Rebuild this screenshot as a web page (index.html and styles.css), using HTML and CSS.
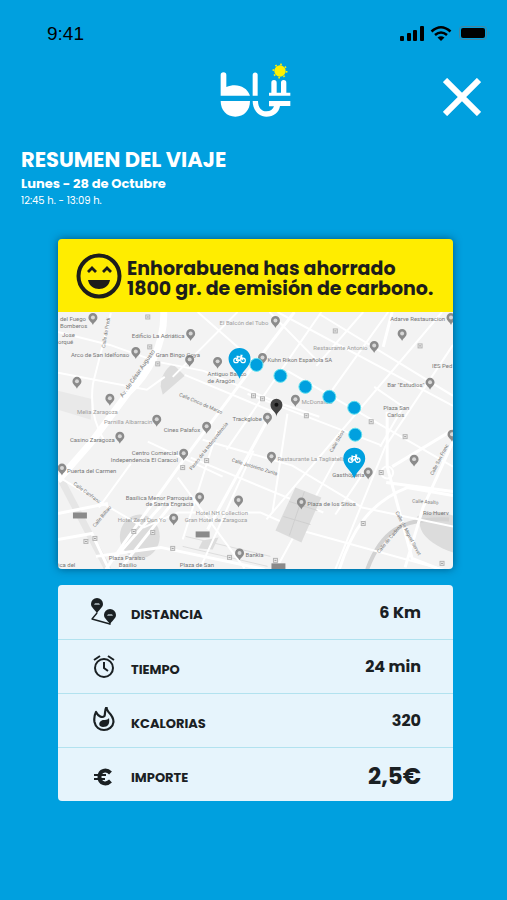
FILE: index.html
```html
<!DOCTYPE html>
<html lang="es">
<head>
    <meta charset="UTF-8">
    <meta name="viewport" content="width=device-width, initial-scale=1">
    <title>Resumen del viaje</title>
    <link rel="stylesheet" href="styles.css">
</head>
<body>
    <div class="status">
        <span class="clock">9:41</span>
        <svg class="status-icons" viewBox="0 0 92 18" aria-hidden="true">
            <rect x="0" y="11" width="4" height="5" rx="1"/>
            <rect x="7" y="8" width="4" height="8" rx="1"/>
            <rect x="13" y="5" width="4" height="11" rx="1"/>
            <rect x="20" y="1" width="4" height="15" rx="1"/>
            <g fill="none" stroke="#000" stroke-width="2.6">
                <path d="M31.5 6.5Q41-2 50.500 6.500"/>
                <path d="M35 10Q41 5 47 10"/>
            </g>
            <path d="M37.500 12.500Q41 10 44.500 12.500L41 16Z"/>
            <rect x="59.500" y="1.500" width="27" height="13" rx="3" fill="none" stroke="#47849d"/>
            <rect x="61" y="3" width="24" height="10" rx="2"/>
            <path d="M88.500 6v4q2-2 0-4" fill="#47849d"/>
        </svg>
    </div>

    <header class="top">
        <svg class="logo" viewBox="60 35 216 165" role="img" aria-label="blü">
            <g fill="#fff">
                <path d="M62 74a8 8 0 0 1 17 0v36c30-12 61-2 71 26H62Z"/>
                <path d="M62 152h88c0 28-18 47-44 47s-44-19-44-47Z"/>
                <path d="M158 74a7 7 0 0 1 15 0v62h-15Z"/>
                <path d="M158 152h16c0 20 11 31 25 31 12 0 20-6 23-15h-15v-16h64v15h-31c-3 20-19 32-41 32-24 0-41-20-41-47Z"/>
                <path d="M207 127h7V97a8 8 0 0 1 16 0v30h13V97a8 8 0 0 1 16 0v30h12v9h-64Z"/>
            </g>
            <circle cx="240" cy="62" r="17" fill="#fff200"/>
            <circle cx="240" cy="62" r="20" fill="none" stroke="#fff200" stroke-width="5" stroke-dasharray="5 10.700"/>
        </svg>
        <button class="close" type="button" aria-label="Cerrar">
            <svg viewBox="0 0 38 38"><path d="M2 2L36 36M36 2L2 36"/></svg>
        </button>
    </header>

    <main>
        <section class="heading">
            <h1>RESUMEN DEL VIAJE</h1>
            <p class="date">Lunes - 28 de Octubre</p>
            <p class="hours">12:45 h. - 13:09 h.</p>
        </section>

        <section class="trip">
            <div class="banner">
                <svg class="smile" viewBox="0 0 46 46" aria-hidden="true">
                    <circle cx="23" cy="23" r="20.500" fill="none" stroke="#1d1d1b" stroke-width="4"/>
                    <path d="M12 19l4-4 4 4M27 19l4-4 4 4" fill="none" stroke="#1d1d1b" stroke-width="2.800"/>
                    <path d="M12 27h22c-1 6-6 9-11 9s-10-3-11-9Z" fill="#1d1d1b"/>
                </svg>
                <p>Enhorabuena has ahorrado<br>1800 gr. de emisión de carbono.</p>
            </div>
            <svg class="map" viewBox="0 0 396 258" preserveAspectRatio="xMidYMid slice" role="img" aria-label="Mapa del recorrido">
                <defs>
                    <g id="pin">
                        <path d="M0 6C-1 3-4.500 2-4.500-1.500a4.500 4.500 0 0 1 9 0C4.500 2 1 3 0 6Z" fill="#8b8b8b"/>
                        <circle cy="-1.500" r="2" fill="#d8d8d8"/>
                    </g>
                    <g id="stop">
                        <rect x="-2" y="-2" width="4" height="4" fill="#eee" stroke="#b4b4b4"/>
                        <path d="M-1 0h2" stroke="#999"/>
                    </g>
                    <g id="bike">
                        <path d="M0 20C-2 12-11 8-11 0a11 11 0 0 1 22 0C11 8 2 12 0 20Z" fill="#00a0df"/>
                        <g fill="none" stroke="#fff" stroke-width="1.200">
                            <circle cx="-3.500" cy="1.500" r="2.300"/>
                            <circle cx="3.500" cy="1.500" r="2.300"/>
                            <path d="M-3.500 1.500L-1.500-2H2L0 1.500h-3.500M3.500 1.500L1.500-3.500H3M-3-2.500h2"/>
                        </g>
                    </g>
                </defs>
                <rect width="396" height="258" fill="#f3f3f3"/>

                <!-- parks and squares -->
                <g fill="#dcdcdc">
                    <path d="M0 79l33 8v21L0 98Z" fill="#e9e9e9"/>
                    <path d="M115 52l12 12-22 19-2-8c0-10 5-18 12-23Z"/>
                    <path d="M360 205c15-8 26-3 36-1v37c-15-5-28-13-32-23Z"/>
                    <ellipse cx="82" cy="225" rx="20" ry="22"/>
                    <path d="M145 229l16-3-6 12-14-1Z"/>
                </g>
                <g fill="none" stroke="#e6e6e6">
                    <path d="M4 170L50 258" stroke-width="7"/>
                    <path d="M310 258c14-38 34-52 82-50" stroke="#d2d2d2" stroke-width="4"/>
                    <path d="M128 225l85 20M125 235l85 20" stroke="#ddd"/>
                </g>

                <!-- streets -->
                <g fill="none" stroke="#fff" stroke-width="2">
                    <path d="M106 0c1 34-17 64-35 80L34 130 0 169" stroke-width="7"/>
                    <path d="M237 0L211 34 134 137 66 232 48 258M150 218L220 90" stroke-width="3"/>
                    <path d="M0 165l45 27 41 24 34-15 83 0 41 18 152 42" stroke-width="2"/>
                    <path d="M53 1L35 72c-3 23 2 42 12 58M0 20l52 13 48 17 46 9 72 31 44 15M0 61l89 17 18-13M127 63l91 38"/>
                    <path d="M140 0l57 50M180 0l-65 65M212 0l50 51M264 0L169 138M306 0l-47 54M331 0l-56 78M385 0L209 208M396 33l-68 102-50 123M220 0l176 94M262 2l134 82M230 59l166 96M190 82l135 52M317 75l29 20-23 40"/>
                    <path d="M145 128l90 26 70 42 91 19M133 146l133 55M120 166l67 91M90 130l75 35M73 152l-32 44M160 118l-35 110M196 139l-54 119M280 145l-61 112M230 102l-15 99M309 157l-31 46"/>
                    <path d="M282 258c12-38 30-67 68-82l46 8M330 100v55l25 92 28 11M335 0l-9 35M335 155l61-37M329 171l67 9M348 256l18-60 30-66" stroke-width="3"/>
                    <path d="M0 202l50-10M0 228l34-6 17 36M38 245l65-9 104 22M55 249L107 190M62 258l53-67" stroke-width="3"/>
                    <circle cx="330" cy="161" r="6"/>
                </g>
                <path d="M238 176l26 10-20 45-26-12Z" fill="#dcdcdc"/>
                <path d="M232 190l28 9M226 205l27 8M247 180l-15 44" fill="none" stroke="#cfcfcf"/>

                <!-- small transit stops -->
                <use href="#stop" x="90" y="5"/><use href="#stop" x="92" y="35"/><use href="#stop" x="100" y="52"/>
                <use href="#stop" x="196" y="84"/><use href="#stop" x="205" y="87"/><use href="#stop" x="249" y="104"/>
                <use href="#stop" x="278" y="19"/><use href="#stop" x="363" y="34"/>
                <use href="#stop" x="314" y="110"/><use href="#stop" x="348" y="125"/><use href="#stop" x="149" y="149"/>
                <use href="#stop" x="28" y="230"/><use href="#stop" x="37" y="227"/><use href="#stop" x="76" y="220"/>
                <use href="#stop" x="95" y="221"/><use href="#stop" x="115" y="237"/><use href="#stop" x="172" y="246"/>
                <use href="#stop" x="324" y="161"/><use href="#stop" x="306" y="212"/><use href="#stop" x="385" y="252"/>
                <use href="#stop" x="125" y="156"/><use href="#stop" x="218" y="249"/>
                <g fill="#8a8a8a">
                    <rect x="15" y="201" width="14" height="6"/>
                    <rect x="138" y="220" width="14" height="6"/>
                    <rect x="214" y="252" width="14" height="6"/>
                </g>

                <use href="#pin" x="35" y="7"/><use href="#pin" x="78" y="41"/><use href="#pin" x="133" y="23"/>
                <use href="#pin" x="132" y="49"/><use href="#pin" x="160" y="51"/><use href="#pin" x="19" y="71"/>
                <use href="#pin" x="52" y="88"/><use href="#pin" x="99" y="109"/><use href="#pin" x="62" y="126"/>
                <use href="#pin" x="149" y="116"/><use href="#pin" x="126" y="143"/><use href="#pin" x="4" y="158"/>
                <use href="#pin" x="218" y="10"/><use href="#pin" x="205" y="47"/><use href="#pin" x="238" y="89"/>
                <use href="#pin" x="210" y="107"/><use href="#pin" x="214" y="146"/><use href="#pin" x="317" y="35"/>
                <use href="#pin" x="345" y="23"/><use href="#pin" x="394" y="7"/><use href="#pin" x="373" y="72"/>
                <use href="#pin" x="357" y="149"/><use href="#pin" x="311" y="162"/>
                <use href="#pin" x="142" y="187"/><use href="#pin" x="181" y="190"/><use href="#pin" x="244" y="192"/>
                <use href="#pin" x="116" y="208"/><use href="#pin" x="182" y="243"/><use href="#pin" x="395" y="124"/>

                <g class="places">
                    <text x="2" y="9">del Fuego</text>
                    <text x="2" y="16">Bomberos</text>
                    <text x="4" y="25">Jose</text>
                    <text x="0" y="32">orqué</text>
                    <text x="74" y="26">Edificio La Adriática</text>
                    <text x="13" y="45">Arco de San Idelfonso</text>
                    <text x="98" y="45">Gran Bingo Goya</text>
                    <text x="19" y="102" class="soft">Melia Zaragoza</text>
                    <text x="46" y="112" class="soft">Parnilla Albarracin</text>
                    <text x="12" y="130">Casino Zaragoza</text>
                    <text x="106" y="120">Cines Palafox</text>
                    <text x="74" y="143">Centro Comercial</text>
                    <text x="53" y="150">Independencia El Caracol</text>
                    <text x="9" y="161">Puerta del Carmen</text>
                    <text x="162" y="13" class="soft">El Balcón del Tubo</text>
                    <text x="150" y="64">Antiguo Banco</text>
                    <text x="150" y="71">de Aragón</text>
                    <text x="210" y="50">Kuhn Rikon Española SA</text>
                    <text x="256" y="38" class="soft">Restaurante Antonio</text>
                    <text x="333" y="9">Adarve Restauracion</text>
                    <text x="375" y="56">IES Ped</text>
                    <text x="330" y="75">Bar "Estudios"</text>
                    <text x="326" y="98">Plaza San</text>
                    <text x="330" y="105">Carlos</text>
                    <text x="244" y="92" class="soft">McDonald's</text>
                    <text x="175" y="109">Trackglobe</text>
                    <text x="220" y="149" class="soft">Restaurante La Tagliatella</text>
                    <text x="275" y="165">Gasthöperia</text>
                    <text x="68" y="188">Basílica Menor Parroquia</text>
                    <text x="88" y="195">de Santa Engracia</text>
                    <text x="60" y="211" class="soft">Hotel Zent Don Yo</text>
                    <text x="138" y="204" class="soft">Hotel NH Collection</text>
                    <text x="127" y="211" class="soft">Gran Hotel de Zaragoza</text>
                    <text x="250" y="195">Plaza de los Sitios</text>
                    <text x="51" y="249">Plaza Paraíso</text>
                    <text x="61" y="256">Basilio</text>
                    <text x="188" y="246">Bankia</text>
                    <text x="0" y="256">ica del</text>
                    <text x="122" y="256">Plaza de San</text>
                    <text x="366" y="204">Río Huerv</text>
                    <text transform="translate(65 86) rotate(-55)">Av. de César Augusto</text>
                    <text transform="translate(47 36) rotate(-80)" class="lane">Calle de Predi</text>
                    <text transform="translate(121 84) rotate(23)" class="lane">Calle Cinco de Marzo</text>
                    <text transform="translate(134 159) rotate(-52)" class="lane">Paseo de la Independencia</text>
                    <text transform="translate(174 150) rotate(17)" class="lane">Calle Jerónimo Zurita</text>
                    <text transform="translate(15 173) rotate(36)" class="lane">Calle Canfranc</text>
                    <text transform="translate(37 216) rotate(-50)" class="lane">Calle Bilbao</text>
                    <text transform="translate(275 141) rotate(-60)" class="lane">Calle Sitios</text>
                    <text transform="translate(355 191) rotate(4)" class="lane">Calle Asalto</text>
                    <text transform="translate(322 242) rotate(-50)" class="lane">Calle de Cadena</text>
                    <text transform="translate(338 201) rotate(62)" class="lane">Calle de Miguel Servet</text>
                    <text transform="translate(376 164) rotate(-63)" class="lane">Calle San Franc</text>
                </g>

                <path d="M219 105c0-5-6-6-6-12a6 6 0 0 1 12 0c0 6-6 7-6 12Z" fill="#444"/>
                <circle cx="219" cy="93" r="2" fill="#111"/>

                <g fill="#00a0df" stroke="#5ce0ee">
                    <circle cx="199" cy="53" r="6.500"/>
                    <circle cx="223" cy="64" r="6.500"/>
                    <circle cx="248" cy="75" r="6.500"/>
                    <circle cx="272" cy="85" r="6.500"/>
                    <circle cx="297" cy="96" r="6.500"/>
                    <circle cx="298" cy="123" r="6.500"/>
                </g>
                <use href="#bike" x="182" y="47"/>
                <use href="#bike" x="297" y="147"/>
            </svg>
        </section>

        <table class="stats">
            <tr>
                <td class="icon">
                    <svg viewBox="0 0 28 28" aria-hidden="true">
                        <path d="M7 15L2 21l18 5L11 17" fill="none" stroke="#1a2023" stroke-width="1.400" stroke-linejoin="round" stroke-dasharray="27 20"/>
                        <path d="M7 16C6 12 1 10 1 6a6 6 0 0 1 12 0c0 4-5 6-6 10ZM20 27c-1-4-6-6-6-10a6 6 0 0 1 12 0c0 4-5 6-6 10Z"/>
                        <path d="M4 7l1-2h4l1 2ZM17 18l1-2h4l1 2Z" fill="#8d979c"/>
                    </svg>
                </td>
                <th scope="row">DISTANCIA</th>
                <td class="value">6 Km</td>
            </tr>
            <tr>
                <td class="icon">
                    <svg viewBox="0 0 28 28" aria-hidden="true">
                        <g fill="none" stroke="#1a2023" stroke-width="2">
                            <circle cx="14" cy="15" r="9"/>
                            <path d="M14 9v6l4 3M4 7l6-4M24 7l-6-4"/>
                        </g>
                    </svg>
                </td>
                <th scope="row">TIEMPO</th>
                <td class="value">24 min</td>
            </tr>
            <tr>
                <td class="icon">
                    <svg viewBox="0 0 28 28" aria-hidden="true">
                        <g fill="none" stroke="#1a2023" stroke-width="2.200" stroke-linejoin="round">
                            <path d="M6 5C4 9 4 12 4.500 15c1 5 5 8 9.500 8s9-3 9.500-8c0-5-3-8-5-10-1-1-2-3-2-5-2 3-1 6-2 9-2 2-6 1-8.500-4Z"/>
                        </g>
                        <path d="M19 11c1 6-1 9-6 9-4 0-5-4-2-6 2-2 6 0 8-3Z"/>
                    </svg>
                </td>
                <th scope="row">KCALORIAS</th>
                <td class="value">320</td>
            </tr>
            <tr>
                <td class="icon">
                    <svg viewBox="0 0 28 28" aria-hidden="true">
                        <path d="M20.500 12c-4-4-11-3-11 4s7 8 11 4" fill="none" stroke="#1a2023" stroke-width="4"/>
                        <path d="M4 14h12M4 18h11" fill="none" stroke="#1a2023" stroke-width="2"/>
                    </svg>
                </td>
                <th scope="row">IMPORTE</th>
                <td class="value total">2,5€</td>
            </tr>
        </table>
    </main>
</body>
</html>
```

FILE: styles.css
```css
* {
    margin: 0;
    padding: 0;
    box-sizing: border-box;
}
body {
    min-height: 100vh;
    background: #00a0df;
    color: #1d1d1b;
    font-family: Poppins, Inter, "Open Sans", sans-serif;
}
svg {
    display: block;
}

/* status bar */
.status {
    display: flex;
    justify-content: space-between;
    align-items: center;
    padding: 22px 15px 0 47px;
    color: #000;
}
.clock {
    font-family: "Liberation Sans", sans-serif;
    font-size: 19px;
    line-height: 24px;
}
.status-icons {
    width: 92px;
    height: 18px;
}

/* logo and close */
.top {
    display: grid;
    grid-template-columns: 1fr 72px 1fr;
    align-items: center;
    padding: 16px 26px 0 30px;
}
.logo {
    grid-column: 2;
    width: 72px;
    height: 55px;
}
.close {
    justify-self: end;
    width: 38px;
    height: 38px;
    margin-top: 14px;
    border: 0;
    background: none;
    cursor: pointer;
}
.close path {
    stroke: #fff;
    stroke-width: 6;
}

.heading {
    padding: 29px 21px 31px;
    color: #fff;
}
.heading h1 {
    font-size: 21px;
    line-height: 28px;
}
.date {
    font-size: 13px;
    font-weight: 700;
    line-height: 20px;
}
.hours {
    font-size: 10px;
    line-height: 14px;
}

/* trip card */
.trip {
    margin: 0 54px 16px 58px;
    border-radius: 4px;
    overflow: hidden;
    box-shadow: 0 0 8px rgba(0, 40, 70, 0.6);
}
.banner {
    display: flex;
    align-items: center;
    gap: 5px;
    padding: 14px 18px 13px;
    background: #ffed00;
}
.smile {
    flex: none;
    width: 46px;
    height: 46px;
}
.banner p {
    padding-top: 5px;
    font-size: 19px;
    font-weight: 700;
    line-height: 20px;
}
.map {
    width: 100%;
}
.places text {
    font-family: Roboto, sans-serif;
    font-size: 6px;
    fill: #777;
}
.places .soft {
    fill: #a0a0a0;
}
.places .lane {
    font-size: 5px;
}

/* figures */
.stats {
    width: calc(100% - 112px);
    margin: 0 54px 40px 58px;
    border-spacing: 0;
    border-radius: 4px;
    background: #e6f4fc;
    color: #1a2023;
}
.stats td, .stats th {
    height: 54px;
    vertical-align: middle;
    text-align: left;
}
.stats tr + tr td, .stats tr + tr th {
    border-top: 1px solid #b2e2ef;
}
.stats .icon {
    width: 73px;
    padding-left: 32px;
}
.icon svg {
    width: 28px;
    height: 28px;
    fill: #1a2023;
}
.stats th {
    padding-top: 6px;
    font-size: 13px;
    font-weight: 700;
}
.stats .value {
    padding-right: 32px;
    font-size: 16px;
    font-weight: 700;
    text-align: right;
}
.stats .total {
    padding-top: 3px;
    font-size: 23px;
}
```
